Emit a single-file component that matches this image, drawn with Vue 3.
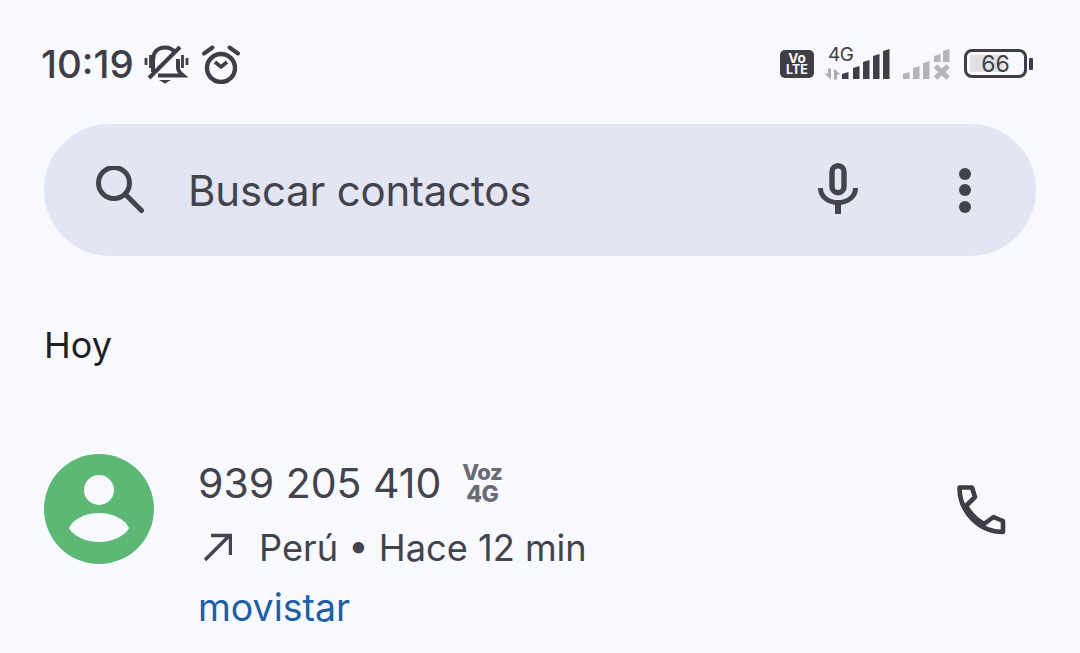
<template>
  <div class="screen">
    <div class="status-bar">
      <div class="status-left">
        <span class="time">10:19</span>
        <svg class="ic-bell" viewBox="0 0 48 40" width="48" height="40">
          <path d="M10 28V16C10 8 15 3.500 22 3.500c5 0 8 2 10.500 5" fill="none" stroke="#3d3e46" stroke-width="4"/>
          <path d="M35 15v9c0 3 2 5 5 7.500H15" fill="none" stroke="#3d3e46" stroke-width="4"/>
          <path d="M6 34 37 3" stroke="#3d3e46" stroke-width="4"/>
          <path d="M16 36h12l-6 3.500z" fill="#3d3e46"/>
          <path d="M3 14v7M7.500 11v13M39.500 11v13M44 14v7" stroke="#3d3e46" stroke-width="2.800"/>
        </svg>
        <svg class="ic-alarm" viewBox="0 0 40 40" width="40" height="40">
          <circle cx="20" cy="24" r="14" fill="none" stroke="#3d3e46" stroke-width="4.400"/>
          <path d="M3 9.500 11.500 3.500M37 9.500 28.500 3.500" stroke="#3d3e46" stroke-width="4" stroke-linecap="round"/>
          <path d="M14 18l6 5 6-5" fill="none" stroke="#3d3e46" stroke-width="3.600"/>
        </svg>
      </div>
      <div class="status-right">
        <div class="volte">
          <span class="volte-vo">Vo</span>
          <span class="volte-lte">LTE</span>
        </div>
        <div class="net">
          <span class="net-label">4G</span>
          <svg viewBox="0 0 20 12" width="20" height="12">
            <path d="M7 .500v11L.500 5.500H4V.500zM10 11.500V.500l6.500 6H13v5z" fill="#a9aab0"/>
          </svg>
        </div>
        <svg class="bars" viewBox="0 0 50 32" width="50" height="32">
          <path v-for="b in strongBars" :key="b.x" :d="b.d" fill="#3d3e46" />
        </svg>
        <svg class="bars-off" viewBox="0 0 50 32" width="50" height="32">
          <path v-for="b in weakBars" :key="b.x" :d="b.d" fill="#b4b5ba" />
          <path d="M34.500 18 47 30M47 18 34.500 30" stroke="#b4b5ba" stroke-width="5" />
        </svg>
        <div class="battery">
          <div class="battery-body">
            <div class="battery-fill"></div>
            <span class="battery-num">66</span>
          </div>
          <div class="battery-tip"></div>
        </div>
      </div>
    </div>

    <div class="search">
      <svg class="ic-search" viewBox="0 0 48 48" width="48" height="48">
        <circle cx="18" cy="17" r="15.500" fill="none" stroke="#42434c" stroke-width="5"/>
        <path d="M29 28 45.500 44.500" stroke="#42434c" stroke-width="5" stroke-linecap="round"/>
      </svg>
      <span class="search-text">Buscar contactos</span>
      <svg class="ic-mic" viewBox="0 0 40 54" width="40" height="54">
        <rect x="14" y="2.700" width="12" height="27" rx="6" fill="none" stroke="#42434c" stroke-width="5.400"/>
        <path d="M2.500 25c0 9 8 14.500 17.500 14.500S37.500 34 37.500 25" fill="none" stroke="#42434c" stroke-width="5"/>
        <path d="M20 40v11" stroke="#42434c" stroke-width="6"/>
      </svg>
      <div class="dots"><i></i><i></i><i></i></div>
    </div>

    <div class="day">Hoy</div>

    <div class="call-row">
      <div class="avatar">
        <svg viewBox="0 0 110 110" width="110" height="110">
          <circle cx="55" cy="36" r="15" fill="#f8f9ff"/>
          <path d="M25 74C29 65 42 59 55 59s26 6 30 15c-4 8-17 14-30 14s-26-6-30-14z" fill="#f8f9ff"/>
        </svg>
      </div>
      <div class="call-info">
        <div class="line-number">
          <span class="number">939 205 410</span>
          <span class="voz">
            <span class="voz-top">Voz</span>
            <span class="voz-bottom">4G</span>
          </span>
        </div>
        <div class="line-meta">
          <svg viewBox="0 0 34 34" width="34" height="34">
            <path d="M7 29 32 4M13 4.500H32.500V24" fill="none" stroke="#42434c" stroke-width="3.400"/>
          </svg>
          <span>Perú • Hace 12 min</span>
        </div>
        <div class="carrier">movistar</div>
      </div>
      <svg class="ic-phone" viewBox="0 0 54 54" width="54" height="54">
        <path d="M6.500 5.500H19L22 15 13 24C17 31 24 38 31 42L40.500 35 50 39V50C26 50 6.500 30 6.500 5.500z" fill="none" stroke="#3d3e46" stroke-width="4.600" stroke-linejoin="round"/>
      </svg>
    </div>
  </div>
</template>

<script setup>
// signal bars, x position and height from the baseline
function bar(x, h, w = 6.5, base = 31) {
  return { x, d: `M${x} ${base}v-${h - 1}l${w} -2v${h + 1}z` }
}
const strongBars = [bar(1, 6), bar(12, 12), bar(22, 18), bar(32, 24), bar(42, 29)]
const weakBars = [bar(2, 6), bar(12, 12), bar(22, 17), bar(33, 7, 6.5, 14), bar(42, 12, 6.5, 14)]
</script>

<style>
html, body { margin: 0; background: #f8f9ff; }
</style>

<style scoped>
.screen {
  width: 1080px;
  height: 653px;
  overflow: hidden;
  background: #f8f9ff;
  font-family: Inter, "Noto Sans", sans-serif;
  color: #42434c;
}
.status-bar {
  height: 124px;
  box-sizing: border-box;
  padding: 44px 47px 0 41px;
  display: flex;
  justify-content: space-between;
  align-items: flex-start;
}
.status-left { display: flex; align-items: center; height: 40px; }
.time { font-size: 38.5px; font-weight: 500; color: #3d3e46; }
.ic-bell { margin-left: 9px; }
.ic-alarm { margin-left: 10px; }
.status-right { display: flex; align-items: flex-start; height: 40px; padding-top: 4px; }
.volte {
  width: 34px;
  height: 28px;
  margin-top: 2px;
  flex: none;
  background: #3d3e46;
  border-radius: 5px;
  color: #f8f9ff;
  font-weight: 700;
  line-height: 12px;
  display: flex;
  flex-direction: column;
  align-items: center;
  justify-content: center;
}
.volte-vo { font-size: 13.5px; }
.volte-lte { font-size: 12.5px; }
.net { width: 22px; margin-left: 10px; position: relative; height: 32px; }
.net-label { position: absolute; left: 4px; top: -5px; font-size: 19px; letter-spacing: -0.5px; color: #3d3e46; }
.net svg { position: absolute; left: 0; top: 20px; }
.bars { margin-left: -5px; }
.bars-off { margin-left: 10px; }
.battery { margin-left: 13px; display: flex; align-items: center; gap: 2px; margin-top: 1px; }
.battery-body {
  position: relative;
  width: 57px;
  height: 23px;
  border: 3px solid #3d3e46;
  border-radius: 8px;
  display: flex;
  align-items: center;
  justify-content: center;
}
.battery-fill { position: absolute; left: 3px; top: 3px; bottom: 3px; width: 34px; background: #dfe0e4; }
.battery-num { position: relative; font-size: 23px; color: #3d3e46; }
.battery-tip { width: 4px; height: 12px; background: #3d3e46; border-radius: 1px; }

.search {
  margin: 0 44px;
  height: 132px;
  border-radius: 66px;
  background: #e3e6f2;
  display: flex;
  align-items: center;
  padding: 0 65px 0 52px;
}
.search-text { margin-left: 44px; font-size: 42px; letter-spacing: -0.2px; flex: 1; }
.ic-mic { margin-right: 101px; }
.dots { display: flex; flex-direction: column; gap: 4.500px; }
.dots i { display: block; width: 12px; height: 12px; border-radius: 50%; background: #42434c; }

.day { margin: 67px 0 0 44px; font-size: 36px; line-height: 44px; color: #1f2025; }

.call-row { display: flex; align-items: flex-start; margin: 87px 0 0 44px; }
.avatar { width: 110px; height: 110px; border-radius: 50%; background: #5cb874; flex: none; }
.avatar svg { display: block; }
.call-info { margin-left: 44px; flex: 1; }
.line-number { display: flex; align-items: center; height: 60px; }
.number { font-size: 41px; margin-top: -2px; }
.voz {
  margin-left: 21px;
  margin-top: -2px;
  width: 40px;
  display: flex;
  flex-direction: column;
  align-items: center;
  line-height: 22px;
  font-weight: 800;
  letter-spacing: -0.5px;
  color: #6b6c73;
}
.voz-top { font-size: 22px; }
.voz-bottom { font-size: 23px; }
.line-meta { display: flex; align-items: center; gap: 27px; font-size: 36.200px; height: 60px; margin-top: 4px; }
.carrier { font-size: 37.500px; color: #205ea5; height: 60px; line-height: 60px; }
.ic-phone { margin: 28px 73px 0 0; }
</style>
